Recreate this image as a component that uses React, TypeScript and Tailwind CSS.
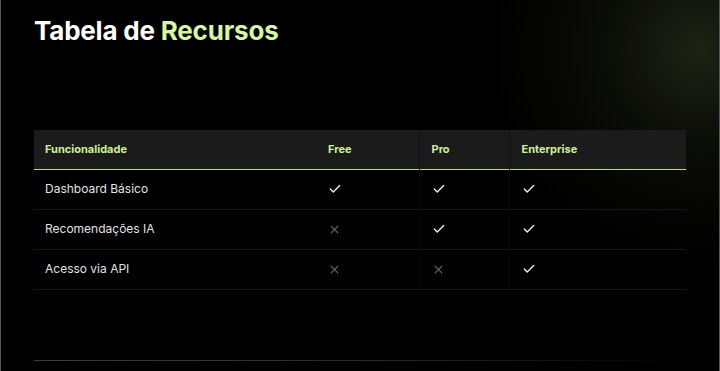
import { Check, X } from "lucide-react";

type Cell = boolean;

interface Row {
  name: string;
  free: Cell;
  pro: Cell;
  enterprise: Cell;
}

const ROWS: Row[] = [
  { name: "Dashboard Básico", free: true, pro: true, enterprise: true },
  { name: "Recomendações IA", free: false, pro: true, enterprise: true },
  { name: "Acesso via API", free: false, pro: false, enterprise: true },
];

function Mark({ on }: { on: boolean }) {
  return on ? (
    <Check className="w-[14px] h-[14px] text-[#d9f5d0]" strokeWidth={2.5} />
  ) : (
    <X className="w-[13px] h-[13px] text-[#5e5e5e]" strokeWidth={2.25} />
  );
}

export default function App() {
  return (
    <div
      className="relative w-[720px] h-[371px] overflow-hidden bg-black border-x border-[#555] text-white"
      style={{ fontFamily: "Inter, 'Noto Sans', sans-serif" }}
    >
      {/* glow top right */}
      <div className="pointer-events-none absolute -top-[160px] right-[-210px] w-[460px] h-[420px] rounded-full bg-[radial-gradient(circle,rgba(40,46,28,0.75)_0%,rgba(24,28,16,0.45)_30%,rgba(0,0,0,0)_68%)]" />

      <div className="relative px-[33px] pt-[14px]">
        <h1 className="text-[26px] font-bold tracking-[-0.2px] leading-[34px]">
          Tabela de <span className="text-[#d6f99a]">Recursos</span>
        </h1>

        <table className="mt-[82px] w-[652px] border-collapse text-left">
          <thead>
            <tr className="bg-[#1b1b1b] border-b-[1.5px] border-[#b9dd86]">
              <th className="w-[282px] h-[39px] pl-[11px] text-[11px] font-bold text-[#cdf291]">Funcionalidade</th>
              <th className="w-[103px] pl-3 text-[11px] font-bold text-[#cdf291]">Free</th>
              <th className="w-[90px] pl-3 border-l border-[#141414] text-[11px] font-bold text-[#cdf291]">Pro</th>
              <th className="pl-3 border-l border-[#141414] text-[11px] font-bold text-[#cdf291]">Enterprise</th>
            </tr>
          </thead>
          <tbody>
            {ROWS.map((r) => (
              <tr key={r.name} className="border-b border-[#161616]">
                <td className="h-[40px] pl-[11px] text-[12px] text-[#e2e2e2]">{r.name}</td>
                <td className="pl-3">
                  <Mark on={r.free} />
                </td>
                <td className="pl-3 border-l border-[#080808]">
                  <Mark on={r.pro} />
                </td>
                <td className="pl-3 border-l border-[#080808]">
                  <Mark on={r.enterprise} />
                </td>
              </tr>
            ))}
          </tbody>
        </table>

        <div className="mt-[70px] h-px w-[652px] bg-[linear-gradient(90deg,#3c4222_0%,#2a2e1a_50%,rgba(0,0,0,0)_100%)]" />
      </div>
    </div>
  );
}
